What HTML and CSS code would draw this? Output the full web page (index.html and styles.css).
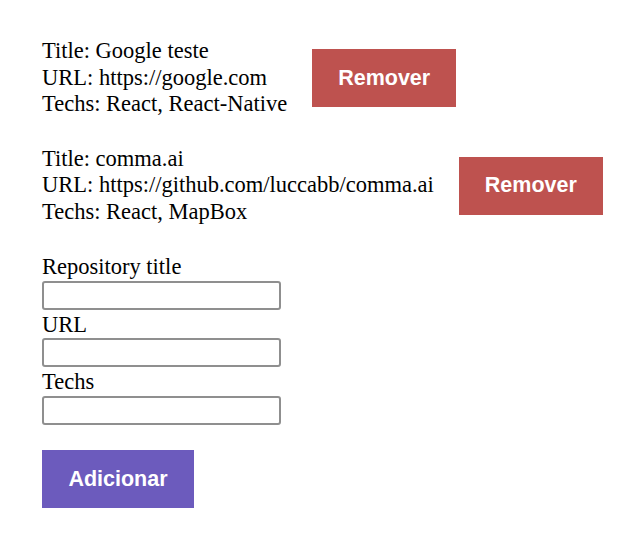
FILE: index.html
```html
<!DOCTYPE html>
<html lang="pt">
<head>
<meta charset="utf-8">
<title>Repositories</title>
<link rel="stylesheet" href="styles.css">
</head>
<body>
<div class="app">
  <ul class="repo-list">
    <li class="repo">
      <div class="repo-info">
        <div>Title: Google teste</div>
        <div>URL: https://google.com</div>
        <div>Techs: React, React-Native</div>
      </div>
      <button class="btn btn-remove" type="button">Remover</button>
    </li>
    <li class="repo">
      <div class="repo-info">
        <div>Title: comma.ai</div>
        <div>URL: https://github.com/luccabb/comma.ai</div>
        <div>Techs: React, MapBox</div>
      </div>
      <button class="btn btn-remove" type="button">Remover</button>
    </li>
  </ul>
  <form class="repo-form">
    <label class="field-label" for="title">Repository title</label>
    <input class="field-input" id="title" type="text">
    <label class="field-label" for="url">URL</label>
    <input class="field-input" id="url" type="text">
    <label class="field-label" for="techs">Techs</label>
    <input class="field-input" id="techs" type="text">
    <button class="btn btn-add" type="button">Adicionar</button>
  </form>
</div>
</body>
</html>
```

FILE: styles.css
```css
html, body {
  margin: 0;
  padding: 0;
  background: #ffffff;
}

body {
  font-family: "Liberation Serif", "Times New Roman", serif;
  font-size: 22.5px;
  line-height: 26.7px;
  color: #000000;
}

.app {
  padding: 38px 0 0 42px;
}

.repo-list {
  list-style: none;
  margin: 0;
  padding: 0;
}

.repo {
  display: flex;
  align-items: center;
  gap: 25px;
}

.repo + .repo {
  margin-top: 27.5px;
}

.btn {
  border: 0;
  height: 58px;
  padding: 0;
  font-family: "Liberation Sans", Arial, sans-serif;
  font-weight: bold;
  font-size: 21.5px;
  color: #ffffff;
  cursor: pointer;
}

.btn-remove {
  background: #be524f;
  width: 144px;
}

.btn-add {
  background: #6c5bbd;
  width: 152px;
  margin-top: 23.4px;
}

.repo-form {
  display: flex;
  flex-direction: column;
  align-items: flex-start;
  margin-top: 28.2px;
}

.field-label {
  display: block;
  line-height: 26.7px;
}

.field-input {
  box-sizing: border-box;
  width: 239px;
  height: 29px;
  margin: 0 0 2px 0;
  border: 2px solid #8f8f8f;
  border-radius: 3px;
  background: #ffffff;
  font-size: 16px;
}
```
